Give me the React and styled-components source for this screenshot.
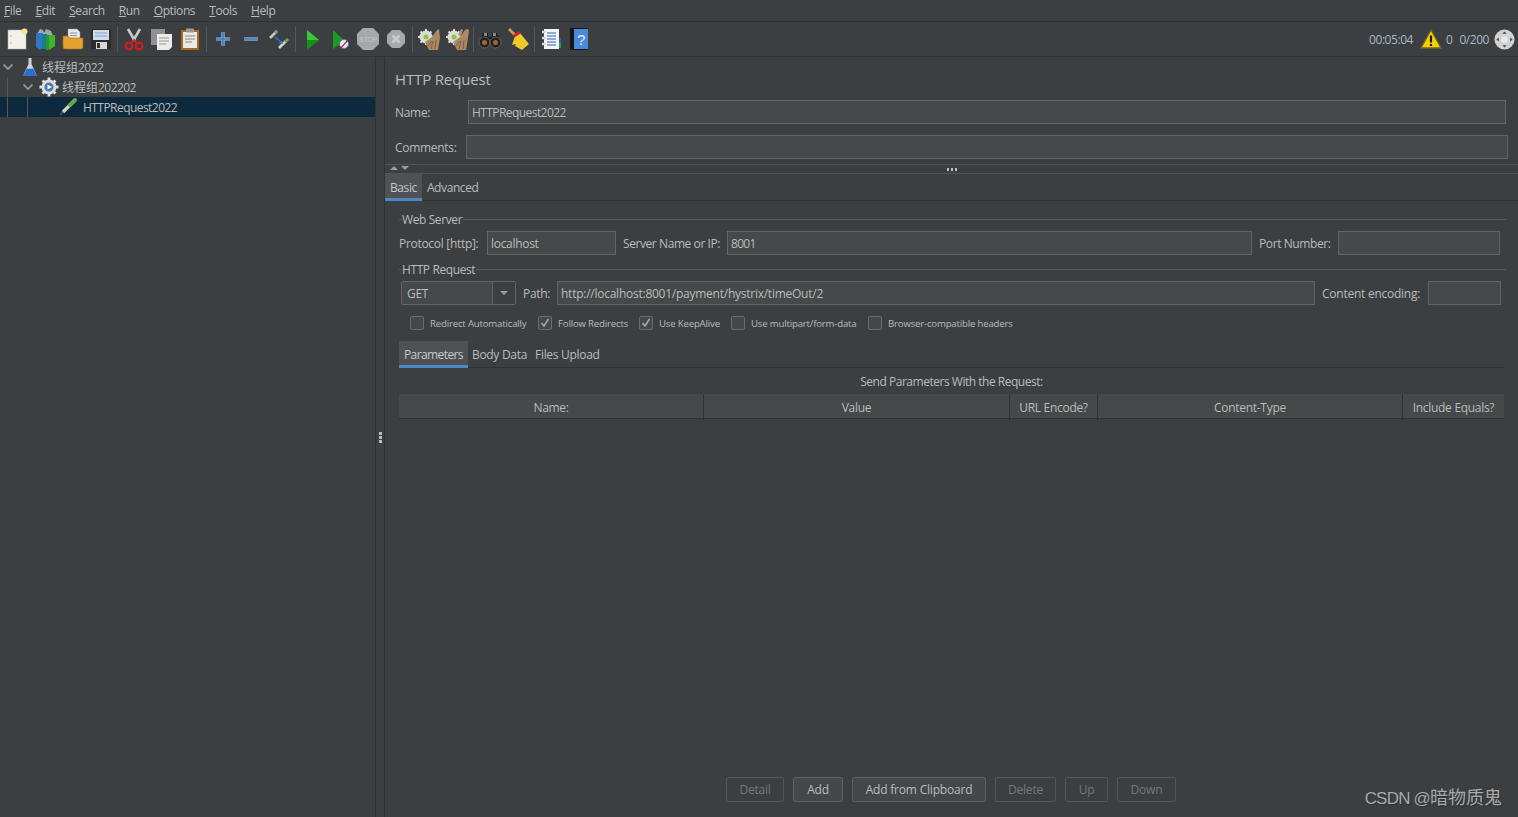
import React from "react";
import styled, { createGlobalStyle } from "styled-components";

const Global = createGlobalStyle`
  html, body {
    margin: 0;
    padding: 0;
    height: 100%;
    background: #3c3f41;
  }
  body {
    font-family: "Open Sans", "Noto Sans CJK SC", sans-serif;
    font-size: 12px;
    color: #bbbbbb;
    overflow: hidden;
  }
`;

const Page = styled.div`
  width: 1518px;
  height: 817px;
  display: flex;
  flex-direction: column;
  position: relative;
  overflow: hidden;
  background: #3c3f41;
  letter-spacing: -0.3px;
`;

const MenuBar = styled.div`
  height: 21px;
  display: flex;
  align-items: center;
  padding-left: 4px;
  gap: 14px;
  letter-spacing: -0.4px;
  border-bottom: 1px solid #2f3133;
`;

const MenuItem = styled.span`
  line-height: 21px;
  &::first-letter {
    text-decoration: underline;
  }
`;

const Toolbar = styled.div`
  height: 34px;
  display: flex;
  align-items: center;
  padding-left: 3px;
  border-bottom: 1px solid #323232;
`;

const ToolButton = styled.div`
  width: 28px;
  height: 28px;
  flex: none;
  display: flex;
  align-items: center;
  justify-content: center;
`;

const ToolSep = styled.div`
  width: 1px;
  height: 26px;
  margin: 0 2px;
  flex: none;
  background: #55585a;
`;

const Status = styled.div`
  margin-left: auto;
  display: flex;
  align-items: center;
  padding-right: 3px;
  color: #a9b7c6;
`;

const Elapsed = styled.span`
  margin-right: 7px;
  letter-spacing: -0.45px;
`;

const StatusCount = styled.span`
  margin: 0 ${(p) => p.$right || 0}px 0 ${(p) => p.$left || 0}px;
  letter-spacing: -0.45px;
`;

const Body = styled.div`
  flex: 1;
  display: flex;
  min-height: 0;
`;

const TreePane = styled.div`
  width: 375px;
  flex: none;
  border-right: 1px solid #2f3133;
`;

const TreeRow = styled.div`
  height: 20px;
  display: flex;
  align-items: center;
  padding-left: 7px;
  white-space: nowrap;
  letter-spacing: -0.55px;
  background: ${(p) => (p.$selected ? "#0d293e" : "transparent")};
`;

const Cjk = styled.span`
  letter-spacing: 0;
`;

const Guide = styled.span`
  width: 19px;
  height: 20px;
  flex: none;
  border-left: 1px solid #55585a;
`;

const Chevron = styled.svg`
  width: 12px;
  height: 12px;
  flex: none;
  margin-left: -5px;
  margin-right: ${(p) => p.$gap}px;
`;

const TreeIcon = styled.svg`
  width: 20px;
  height: 20px;
  flex: none;
  margin-left: ${(p) => p.$left || 0}px;
  margin-right: ${(p) => p.$gap}px;
`;

const SplitHandle = styled.div`
  width: 8px;
  flex: none;
  display: flex;
  flex-direction: column;
  align-items: center;
  justify-content: center;
  gap: 1px;
  border-right: 1px solid #2f3133;
`;

const Dot = styled.span`
  width: 3px;
  height: 3px;
  background: #bbbbbb;
`;

const Editor = styled.div`
  flex: 1;
  min-width: 0;
  display: flex;
  flex-direction: column;
  position: relative;
`;

const Title = styled.div`
  font-size: 15px;
  line-height: 20px;
  margin: 12px 0 0 10px;
  letter-spacing: -0.15px;
`;

const NameRow = styled.div`
  display: flex;
  align-items: center;
  height: 24px;
  margin: ${(p) => p.$top}px ${(p) => p.$right}px 0 10px;
`;

const NameLabel = styled.label`
  width: ${(p) => p.$w}px;
  flex: none;
`;

const Field = styled.div`
  height: 24px;
  box-sizing: border-box;
  flex: ${(p) => (p.$w ? "none" : "1")};
  width: ${(p) => (p.$w ? `${p.$w}px` : "auto")};
  min-width: 0;
  padding-left: 3px;
  line-height: 23px;
  letter-spacing: ${(p) => p.$ls ?? -0.3}px;
  background: #45494a;
  border: 1px solid #646464;
  white-space: nowrap;
  overflow: hidden;
`;

const Collapser = styled.div`
  height: 8px;
  margin-top: 5px;
  position: relative;
  display: flex;
  align-items: center;
  justify-content: center;
  gap: 1px;
  border-top: 1px solid #505254;
  border-bottom: 1px solid #505254;
`;

const Arrows = styled.div`
  position: absolute;
  left: 5px;
  top: 1px;
  display: flex;
  gap: 3px;
`;

const Tri = styled.span`
  width: 0;
  height: 0;
  border-left: 4px solid transparent;
  border-right: 4px solid transparent;
  ${(p) =>
    p.$up ? "border-bottom: 4px solid #9a9c9e;" : "border-top: 4px solid #9a9c9e;"}
`;

const GripDot = styled.span`
  width: 2px;
  height: 3px;
  margin: 0 0.5px;
  background: #bbbbbb;
`;

const TabBar = styled.div`
  display: flex;
  height: 27px;
  box-sizing: border-box;
  border-bottom: 1px solid #323232;
`;

const Tab = styled.div`
  padding: 0 ${(p) => p.$pad}px;
  line-height: 27px;
  height: 27px;
  box-sizing: border-box;
  letter-spacing: ${(p) => p.$ls ?? -0.4}px;
  background: ${(p) => (p.$active ? "#4e5254" : "transparent")};
  border-bottom: ${(p) => (p.$active ? "3px solid #4a88c7" : "none")};
  color: ${(p) => (p.$active ? "#c8c8c8" : "#bbbbbb")};
`;

const Form = styled.div`
  flex: 1;
  display: flex;
  flex-direction: column;
  padding: 0 14px 0 14px;
  min-height: 0;
`;

const Legend = styled.div`
  display: flex;
  align-items: center;
  height: 16px;
  margin-top: ${(p) => p.$top}px;
  margin-right: -2px;
  letter-spacing: -0.4px;
  &::before {
    content: "";
    width: 3px;
    height: 1px;
    background: #55585a;
  }
  &::after {
    content: "";
    flex: 1;
    height: 1px;
    margin-left: 1px;
    background: #55585a;
  }
`;

const FieldRow = styled.div`
  display: flex;
  align-items: center;
  height: 24px;
  margin-top: ${(p) => p.$top}px;
  margin-right: ${(p) => p.$right}px;
`;

const FieldLabel = styled.label`
  white-space: nowrap;
  flex: none;
  width: ${(p) => p.$w}px;
  margin-left: ${(p) => p.$left || 0}px;
  letter-spacing: ${(p) => p.$ls ?? -0.3}px;
`;

const Combo = styled.div`
  width: 115px;
  height: 24px;
  box-sizing: border-box;
  flex: none;
  margin-left: 2px;
  margin-right: 7px;
  display: flex;
  align-items: center;
  background: #45494a;
  border: 1px solid #646464;
  border-radius: 2px;
  padding-left: 5px;
`;

const ComboValue = styled.span`
  flex: 1;
`;

const ComboArrow = styled.span`
  width: 22px;
  height: 22px;
  display: flex;
  align-items: center;
  justify-content: center;
  border-left: 1px solid #646464;
  background: #3c3f41;
`;

const Checks = styled.div`
  display: flex;
  align-items: center;
  height: 16px;
  margin-top: 10px;
  padding-left: 11px;
  font-size: 9.6px;
  letter-spacing: -0.17px;
`;

const Check = styled.span`
  display: flex;
  align-items: center;
  width: ${(p) => p.$w}px;
  flex: none;
  white-space: nowrap;
`;

const Box = styled.span`
  width: 14px;
  height: 14px;
  box-sizing: border-box;
  margin-right: 6px;
  flex: none;
  display: flex;
  align-items: center;
  justify-content: center;
  background: #43494a;
  border: 1px solid #6b6b6b;
  border-radius: 2px;
`;

const SubTabs = styled(TabBar)`
  margin-top: 10px;
`;

const TableCaption = styled.div`
  height: 26px;
  line-height: 27px;
  text-align: center;
  letter-spacing: -0.48px;
`;

const TableHead = styled.div`
  display: grid;
  grid-template-columns: 305px 306px 88px 305px 101px;
  height: 25px;
  background: #45494a;
  border-bottom: 1px solid #323232;
  box-sizing: border-box;
`;

const HeadCell = styled.div`
  line-height: 27px;
  text-align: center;
  border-right: ${(p) => (p.$last ? "none" : "1px solid #323232")};
`;

const TableBody = styled.div`
  flex: 1;
`;

const Buttons = styled.div`
  display: flex;
  gap: 9px;
  height: 25px;
  margin-bottom: 15px;
  padding-left: 327px;
`;

const Btn = styled.div`
  width: ${(p) => p.$w}px;
  height: 25px;
  flex: none;
  box-sizing: border-box;
  line-height: 24px;
  text-align: center;
  border-radius: 2px;
  letter-spacing: -0.2px;
  border: 1px solid ${(p) => (p.$off ? "#535557" : "#5e6060")};
  background: ${(p) => (p.$off ? "transparent" : "#44484a")};
  color: ${(p) => (p.$off ? "#777777" : "#bbbbbb")};
`;

const Watermark = styled.div`
  position: absolute;
  right: 16px;
  bottom: 8px;
  font-family: "Liberation Sans", "Noto Sans CJK SC", sans-serif;
  font-size: 17px;
  letter-spacing: -0.8px;
  color: #a8aaab;
  text-shadow: 1px 1px 1px #2d2f30;
`;

const WatermarkCjk = styled.span`
  font-size: 18px;
  letter-spacing: 0;
`;

const I = ({ children }) => (
  <svg width="24" height="24" viewBox="0 0 24 24">
    {children}
  </svg>
);

const NewIcon = () => (
  <I>
    <rect x="3" y="3" width="18" height="19" fill="#f1f1ea" stroke="#b9b9b0" strokeWidth=".5" />
    <circle cx="6" cy="9" r=".8" fill="#aaa" />
    <circle cx="6" cy="16" r=".8" fill="#aaa" />
    <circle cx="19.500" cy="4.500" r="3" fill="#f6e58a" />
  </I>
);

const TemplatesIcon = () => (
  <I>
    <path d="M4 7 7 2l3 1 1 3 2-4 3 1 2 1 2 5z" fill="#a3a8aa" />
    <path d="M3 6h7v14l-3 3-4-3z" fill="#2f76c6" />
    <path d="M9 7h5v15H9z" fill="#14808f" />
    <path d="M13 8h9v11l-6 4h-3z" fill="#3fb52c" />
    <path d="M13 8h3v15h-3z" fill="#2e9423" />
  </I>
);

const OpenIcon = () => (
  <I>
    <path d="M7 2h9l3 3v10H7z" fill="#e8e8e8" stroke="#999" strokeWidth=".5" />
    <path d="M9 6h7M9 8.500h7" stroke="#999" />
    <path d="M2 9h5l2 2h13v9a2 2 0 0 1-2 2H4a2 2 0 0 1-2-2z" fill="#e4a22f" stroke="#9c6a14" strokeWidth=".6" />
  </I>
);

const SaveIcon = () => (
  <I>
    <path d="M3 2h18l1 1v19H2V3z" fill="#2c2c2e" />
    <rect x="4" y="3" width="16" height="10" fill="#cfdcea" />
    <path d="M6 6h12M6 9h12" stroke="#7fa4cc" />
    <rect x="7" y="15" width="11" height="7" fill="#d8d8d8" />
    <rect x="8" y="16" width="3" height="5" fill="#333" />
  </I>
);

const CutIcon = () => (
  <I>
    <path d="M6 2 13 14M18 2 11 14" stroke="#c7c9ca" strokeWidth="2.600" />
    <circle cx="7" cy="19" r="3.400" fill="none" stroke="#cf1d1d" strokeWidth="2.200" />
    <circle cx="17" cy="19" r="3.400" fill="none" stroke="#cf1d1d" strokeWidth="2.200" />
    <path d="m9 16 3-3 3 3" stroke="#cf1d1d" strokeWidth="1.600" fill="none" />
  </I>
);

const CopyIcon = () => (
  <I>
    <rect x="1" y="2" width="14" height="16" fill="#8f9192" />
    <path d="M7 7h15v13l-3 3H7z" fill="#ececec" />
    <path d="M9 11h10M9 14h10M9 17h7" stroke="#999" />
  </I>
);

const PasteIcon = () => (
  <I>
    <rect x="3" y="3" width="18" height="20" rx="1" fill="#a76a1c" />
    <rect x="5" y="5" width="14" height="16" fill="#e9e9e4" />
    <rect x="8" y="1.500" width="8" height="4" rx="1" fill="#9b9b9b" />
    <path d="M7 9h10M7 12h10M7 15h7" stroke="#888" />
  </I>
);

const PlusIcon = () => (
  <I>
    <path d="M12 5v14M5 12h14" stroke="#9cc0e6" strokeWidth="3.200" />
    <path d="M12 5v14M5 12h14" stroke="#3c78bb" strokeWidth="1.600" />
  </I>
);

const MinusIcon = () => (
  <I>
    <path d="M5 12h14" stroke="#9cc0e6" strokeWidth="3.200" />
    <path d="M5 12h14" stroke="#3c78bb" strokeWidth="1.600" />
  </I>
);

const ToggleIcon = () => (
  <I>
    <path d="m3 11 7-7" stroke="#c5c8c0" strokeWidth="2.600" />
    <path d="m8 6 2-2" stroke="#6aa84f" strokeWidth="2.800" />
    <path d="m12 21 7-7" stroke="#d4d6cf" strokeWidth="2.600" />
    <path d="m18 15 3-3" stroke="#6aa84f" strokeWidth="2.800" />
    <path d="m8 10 6 5" stroke="#2c78d8" strokeWidth="1.500" />
    <path d="m16 17-4-.5 2.500-3z" fill="#2c78d8" />
  </I>
);

const PlayIcon = () => (
  <I>
    <path d="M7 3 19 13 7 23z" fill="#14901a" />
    <path d="M7 3 19 13H7z" fill="#3fc53c" />
  </I>
);

const PlayNoPauseIcon = () => (
  <I>
    <path d="M5 3 17 14 5 22z" fill="#1b9a1f" />
    <circle cx="16" cy="17" r="4.500" fill="#e9eef5" stroke="#3978c9" />
    <path d="m12 22 8-9" stroke="#d02020" strokeWidth="1.200" />
  </I>
);

const StopIcon = () => (
  <I>
    <path d="M7 1h10l6 6v10l-6 6H7l-6-6V7z" fill="#a6a8a9" />
    <text x="12" y="15" textAnchor="middle" fontSize="7" fontWeight="700" fontFamily="Liberation Sans" fill="#bcbebf">
      STOP
    </text>
  </I>
);

const ShutdownIcon = () => (
  <I>
    <path d="M8 3h8l5 5v8l-5 5H8l-5-5V8z" fill="#a6a8a9" />
    <path d="m8.500 8.500 7 7m0-7-7 7" stroke="#c9cbcc" strokeWidth="2.600" />
  </I>
);

const BroomGear = ({ double }) => (
  <I>
    <circle cx="9" cy="10" r="6.500" fill="#dcdcd6" />
    <path d="M9 2v16M1 10h16M3.500 4.500l11 11M14.500 4.500l-11 11" stroke="#dcdcd6" strokeWidth="2" />
    <circle cx="9" cy="10" r="2.500" fill="#8cc63f" />
    {double && <path d="m13 8 3-6 2 1-2 6z" fill="#b08c66" />}
    <path d="M22 2 20 3 15 10 8 15l4 8h9l2-12z" fill="#ab8863" />
    <path d="m14 22 2-8m2 8 1-9m-8 6 4-5" stroke="#7f5f42" />
    {double && <path d="m20 9 2-7 2 1-1 7z" fill="#b08c66" />}
  </I>
);

const BinocularsIcon = () => (
  <I>
    <path d="M5 6h5v4h4V6h5l4 10H1z" fill="#1c1c1c" />
    <path d="M6 6h3v3H6zM15 6h3v3h-3z" fill="#8a8a8a" />
    <circle cx="6.500" cy="15.500" r="5.500" fill="#222" stroke="#666" />
    <circle cx="17.500" cy="15.500" r="5.500" fill="#222" stroke="#666" />
    <circle cx="6.500" cy="15.500" r="2.500" fill="#a6642c" />
    <circle cx="17.500" cy="15.500" r="2.500" fill="#a6642c" />
  </I>
);

const BroomIcon = () => (
  <I>
    <path d="m3 2 7 7" stroke="#c79a56" strokeWidth="2.800" />
    <path d="M9 9 14 6l9 11-7 6-7-4 1-2-4 1z" fill="#f0c92c" />
    <path d="m7 8 6-4 1.500 2.500-6 4z" fill="#d3202a" />
  </I>
);

const ListIcon = () => (
  <I>
    <rect x="5" y="2" width="15" height="20" fill="#f4f4f4" />
    <path d="M8 6h9M8 9h9M8 12h9M8 15h9M8 18h9" stroke="#2b62bb" />
    <path d="M3 5h4M3 11h4M3 17h4" stroke="#dadada" strokeWidth="2.400" />
    <rect x="20" y="11" width="2" height="5" fill="#2b62bb" />
    <rect x="20" y="16" width="2" height="5" fill="#2f9e3a" />
  </I>
);

const HelpIcon = () => (
  <I>
    <rect x="3" y="1" width="18" height="22" rx="1" fill="#161616" />
    <rect x="7" y="2" width="14" height="20" fill="#4b8ad8" />
    <text x="14" y="18" textAnchor="middle" fontSize="15" fontFamily="Liberation Sans" fill="#e4eefa">
      ?
    </text>
  </I>
);

const WarnIcon = () => (
  <svg width="22" height="20" viewBox="0 0 22 20">
    <path d="M11 1 21 19H1z" fill="#f6d000" stroke="#6f6420" strokeWidth="1.300" />
    <path d="M11 6.500v7" stroke="#1c1c1c" strokeWidth="2.200" />
    <circle cx="11" cy="16" r="1.200" fill="#1c1c1c" />
  </svg>
);

const LogIcon = () => (
  <svg width="21" height="21" viewBox="0 0 22 22">
    <circle cx="11" cy="11" r="10.500" fill="#d2d2d2" />
    <circle cx="11" cy="11" r="3.500" fill="#e8e8e8" />
    <path d="M11 2.500 8.800 5h4.400zM11 19.500 8.800 17h4.400zM2.500 11 5 8.800v4.400zM19.500 11 17 8.800v4.400z" fill="#444" />
  </svg>
);

const Down = ({ $gap }) => (
  <Chevron $gap={$gap} viewBox="0 0 12 12">
    <path d="m1.500 3.500 4.500 4.500 4.500-4.500" fill="none" stroke="#9a9c9e" strokeWidth="1.700" />
  </Chevron>
);

const FlaskIcon = () => (
  <TreeIcon $gap={2} viewBox="0 0 20 20">
    <path d="M8.500 1h3v6l5 11a1 1 0 0 1-1 1h-11a1 1 0 0 1-1-1l5-11z" fill="#cfd4da" />
    <path d="M7 11.500c2 1 4-.5 6 0l3.500 6.500a1 1 0 0 1-1 1h-11a1 1 0 0 1-1-1z" fill="#2a6fce" />
  </TreeIcon>
);

const GearIcon = () => (
  <TreeIcon $gap={3} viewBox="0 0 20 20">
    <circle cx="10" cy="10" r="7.500" fill="#dcdcdc" />
    <path d="M10 .5v19M.5 10h19M3.500 3.500l13 13M16.500 3.500l-13 13" stroke="#dcdcdc" strokeWidth="2.800" />
    <circle cx="10" cy="10" r="4.500" fill="#4a74b5" />
    <path d="M8.500 7.500 13 10l-4.500 2.500z" fill="#fff" />
  </TreeIcon>
);

const PipetteIcon = () => (
  <TreeIcon $left={11} $gap={5} viewBox="0 0 20 20">
    <path d="m2 18 3-3" stroke="#4a4a4a" strokeWidth="2" />
    <path d="m5 15 7-7" stroke="#cfd1cc" strokeWidth="3.400" />
    <path d="m12 8 5-5" stroke="#66a84c" strokeWidth="4" strokeLinecap="round" />
  </TreeIcon>
);

const Tick = () => (
  <svg width="10" height="10" viewBox="0 0 10 10">
    <path d="m1.500 5 2.500 3 4.500-7" fill="none" stroke="#a8a8a8" strokeWidth="1.600" />
  </svg>
);

const menus = ["File", "Edit", "Search", "Run", "Options", "Tools", "Help"];

const checks = [
  { label: "Redirect Automatically", w: 128 },
  { label: "Follow Redirects", w: 101, on: true },
  { label: "Use KeepAlive", w: 92, on: true },
  { label: "Use multipart/form-data", w: 137 },
  { label: "Browser-compatible headers", w: 160 },
];

const columns = ["Name:", "Value", "URL Encode?", "Content-Type", "Include Equals?"];

const buttons = [
  { label: "Detail", w: 58, off: true },
  { label: "Add", w: 50 },
  { label: "Add from Clipboard", w: 134 },
  { label: "Delete", w: 61, off: true },
  { label: "Up", w: 43, off: true },
  { label: "Down", w: 59, off: true },
];

export default function App() {
  return (
    <Page>
      <Global />
      <MenuBar>
        {menus.map((m) => (
          <MenuItem key={m}>{m}</MenuItem>
        ))}
      </MenuBar>
      <Toolbar>
        <ToolButton><NewIcon /></ToolButton>
        <ToolButton><TemplatesIcon /></ToolButton>
        <ToolButton><OpenIcon /></ToolButton>
        <ToolButton><SaveIcon /></ToolButton>
        <ToolSep />
        <ToolButton><CutIcon /></ToolButton>
        <ToolButton><CopyIcon /></ToolButton>
        <ToolButton><PasteIcon /></ToolButton>
        <ToolSep />
        <ToolButton><PlusIcon /></ToolButton>
        <ToolButton><MinusIcon /></ToolButton>
        <ToolButton><ToggleIcon /></ToolButton>
        <ToolSep />
        <ToolButton><PlayIcon /></ToolButton>
        <ToolButton><PlayNoPauseIcon /></ToolButton>
        <ToolButton><StopIcon /></ToolButton>
        <ToolButton><ShutdownIcon /></ToolButton>
        <ToolSep />
        <ToolButton><BroomGear /></ToolButton>
        <ToolButton><BroomGear double /></ToolButton>
        <ToolSep />
        <ToolButton><BinocularsIcon /></ToolButton>
        <ToolButton><BroomIcon /></ToolButton>
        <ToolSep />
        <ToolButton><ListIcon /></ToolButton>
        <ToolButton><HelpIcon /></ToolButton>
        <Status>
          <Elapsed>00:05:04</Elapsed>
          <WarnIcon />
          <StatusCount $left={4} $right={7}>0</StatusCount>
          <StatusCount $right={5}>0/200</StatusCount>
          <LogIcon />
        </Status>
      </Toolbar>
      <Body>
        <TreePane>
          <TreeRow>
            <Down $gap={6} />
            <FlaskIcon />
            <Cjk>线程组</Cjk>2022
          </TreeRow>
          <TreeRow>
            <Guide />
            <Down $gap={5} />
            <GearIcon />
            <Cjk>线程组</Cjk>202202
          </TreeRow>
          <TreeRow $selected>
            <Guide />
            <Guide />
            <PipetteIcon />
            HTTPRequest2022
          </TreeRow>
        </TreePane>
        <SplitHandle>
          <Dot />
          <Dot />
          <Dot />
        </SplitHandle>
        <Editor>
          <Title>HTTP Request</Title>
          <NameRow $top={11} $right={12}>
            <NameLabel $w={73}>Name:</NameLabel>
            <Field $ls={-0.57}>HTTPRequest2022</Field>
          </NameRow>
          <NameRow $top={11} $right={10}>
            <NameLabel $w={71}>Comments:</NameLabel>
            <Field />
          </NameRow>
          <Collapser>
            <Arrows>
              <Tri $up />
              <Tri />
            </Arrows>
            <GripDot />
            <GripDot />
            <GripDot />
          </Collapser>
          <TabBar>
            <Tab $active $pad={5}>Basic</Tab>
            <Tab $pad={5}>Advanced</Tab>
          </TabBar>
          <Form>
            <Legend $top={10}>Web Server</Legend>
            <FieldRow $top={4} $right={4}>
              <FieldLabel $w={88}>Protocol [http]:</FieldLabel>
              <Field $w={129}>localhost</Field>
              <FieldLabel $w={104} $left={7} $ls={-0.42}>Server Name or IP:</FieldLabel>
              <Field $ls={-0.7}>8001</Field>
              <FieldLabel $w={79} $left={7} $ls={-0.4}>Port Number:</FieldLabel>
              <Field $w={162} />
            </FieldRow>
            <Legend $top={6}>HTTP Request</Legend>
            <FieldRow $top={4} $right={3}>
              <Combo>
                <ComboValue>GET</ComboValue>
                <ComboArrow>
                  <Tri />
                </ComboArrow>
              </Combo>
              <FieldLabel $w={34}>Path:</FieldLabel>
              <Field $ls={-0.25}>http://localhost:8001/payment/hystrix/timeOut/2</Field>
              <FieldLabel $w={106} $left={7} $ls={-0.25}>Content encoding:</FieldLabel>
              <Field $w={73} />
            </FieldRow>
            <Checks>
              {checks.map((c) => (
                <Check key={c.label} $w={c.w}>
                  <Box>{c.on && <Tick />}</Box>
                  {c.label}
                </Check>
              ))}
            </Checks>
            <SubTabs>
              <Tab $active $pad={5} $ls={-0.6}>Parameters</Tab>
              <Tab $pad={4} $ls={-0.3}>Body Data</Tab>
              <Tab $pad={4} $ls={-0.3}>Files Upload</Tab>
            </SubTabs>
            <TableCaption>Send Parameters With the Request:</TableCaption>
            <TableHead>
              {columns.map((c, i) => (
                <HeadCell key={c} $last={i === columns.length - 1}>{c}</HeadCell>
              ))}
            </TableHead>
            <TableBody />
            <Buttons>
              {buttons.map((b) => (
                <Btn key={b.label} $w={b.w} $off={b.off}>{b.label}</Btn>
              ))}
            </Buttons>
          </Form>
          <Watermark>
            CSDN @<WatermarkCjk>暗物质鬼</WatermarkCjk>
          </Watermark>
        </Editor>
      </Body>
    </Page>
  );
}
